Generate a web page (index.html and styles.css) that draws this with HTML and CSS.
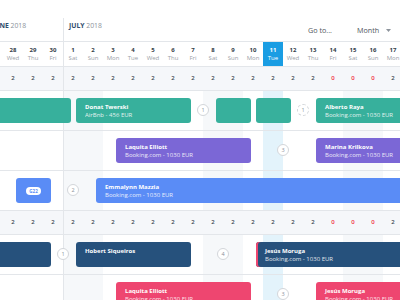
FILE: index.html
```html
<!DOCTYPE html>
<html lang="en">
<head>
<meta charset="UTF-8">
<meta name="viewport" content="width=device-width, initial-scale=1.0">
<title>Reservations - July 2018</title>
<link rel="stylesheet" href="styles.css">
</head>
<body>
<div class="scheduler">
    <div class="topbar">
        <div class="month month-june"><b>JUNE</b> 2018</div>
        <div class="month month-july">
            <span><b>JULY</b> 2018</span>
            <div class="controls">
                <span class="goto">Go to...</span>
                <span class="view-select">Month
                    <svg width="5" height="3" viewBox="0 0 5 3"><path d="M0 0h5L2.5 3z" fill="#8d949c"/></svg>
                </span>
            </div>
        </div>
    </div>

    <div class="timeline">
        <!-- one cell per day, 20px wide -->
        <div class="days">
            <div class="day"><b>26</b>Mon</div>
            <div class="day"><b>27</b>Tue</div>
            <div class="day"><b>28</b>Wed</div>
            <div class="day"><b>29</b>Thu</div>
            <div class="day"><b>30</b>Fri</div>
            <div class="day month-start"><b>1</b>Sat</div>
            <div class="day"><b>2</b>Sun</div>
            <div class="day"><b>3</b>Mon</div>
            <div class="day"><b>4</b>Tue</div>
            <div class="day"><b>5</b>Wed</div>
            <div class="day"><b>6</b>Thu</div>
            <div class="day"><b>7</b>Fri</div>
            <div class="day"><b>8</b>Sat</div>
            <div class="day"><b>9</b>Sun</div>
            <div class="day"><b>10</b>Mon</div>
            <div class="day today"><b>11</b>Tue</div>
            <div class="day"><b>12</b>Wed</div>
            <div class="day"><b>13</b>Thu</div>
            <div class="day"><b>14</b>Fri</div>
            <div class="day"><b>15</b>Sat</div>
            <div class="day"><b>16</b>Sun</div>
            <div class="day"><b>17</b>Mon</div>
            <div class="day"><b>18</b>Tue</div>
        </div>

        <!-- free rooms per day -->
        <div class="totals">
            <div class="total">2</div>
            <div class="total">2</div>
            <div class="total">2</div>
            <div class="total">2</div>
            <div class="total">2</div>
            <div class="total month-start">2</div>
            <div class="total">2</div>
            <div class="total">2</div>
            <div class="total">2</div>
            <div class="total">2</div>
            <div class="total">2</div>
            <div class="total">2</div>
            <div class="total">2</div>
            <div class="total">2</div>
            <div class="total">2</div>
            <div class="total">2</div>
            <div class="total">2</div>
            <div class="total">2</div>
            <div class="total empty">0</div>
            <div class="total empty">0</div>
            <div class="total empty">0</div>
            <div class="total">2</div>
            <div class="total">2</div>
        </div>

        <!-- bookings sit on a half-day grid: check-in / check-out at noon -->
        <div class="lane">
            <div class="booking teal" style="grid-column: 1 / 12;"></div>
            <div class="booking teal" style="grid-column: 12 / 24;"><b>Donat Twerski</b><span>AirBnb - 456 EUR</span></div>
            <div class="gap-count" style="grid-column: 24 / 26;">1</div>
            <div class="booking teal" style="grid-column: 26 / 30;"></div>
            <div class="booking teal" style="grid-column: 30 / 34;"></div>
            <div class="gap-count pending" style="grid-column: 34 / 36;">1</div>
            <div class="booking teal" style="grid-column: 36 / 47;"><b>Alberto Raya</b><span>Booking.com - 1030 EUR</span></div>
        </div>

        <div class="lane">
            <div class="booking purple" style="grid-column: 16 / 30;"><b>Laquita Elliott</b><span>Booking.com - 1030 EUR</span></div>
            <div class="gap-count" style="grid-column: 30 / 36;">3</div>
            <div class="booking purple" style="grid-column: 36 / 47;"><b>Marina Krilkova</b><span>Booking.com - 1030 EUR</span></div>
        </div>

        <div class="lane">
            <div class="booking blue compact" style="grid-column: 6 / 10;"><span class="tag">G22</span></div>
            <div class="gap-count" style="grid-column: 10 / 14;">2</div>
            <div class="booking blue" style="grid-column: 14 / 47;"><b>Emmalynn Mazzia</b><span>Booking.com - 1030 EUR</span></div>
        </div>

        <div class="totals">
            <div class="total">2</div>
            <div class="total">2</div>
            <div class="total">2</div>
            <div class="total">2</div>
            <div class="total">2</div>
            <div class="total month-start">2</div>
            <div class="total">2</div>
            <div class="total">2</div>
            <div class="total">2</div>
            <div class="total">2</div>
            <div class="total">2</div>
            <div class="total">2</div>
            <div class="total">2</div>
            <div class="total">2</div>
            <div class="total">2</div>
            <div class="total">2</div>
            <div class="total">2</div>
            <div class="total">2</div>
            <div class="total empty">0</div>
            <div class="total empty">0</div>
            <div class="total empty">0</div>
            <div class="total">2</div>
            <div class="total">2</div>
        </div>

        <div class="lane">
            <div class="booking navy" style="grid-column: 1 / 10;"></div>
            <div class="gap-count" style="grid-column: 10 / 12;">1</div>
            <div class="booking navy" style="grid-column: 12 / 24;"><b>Hobert Siqueiros</b></div>
            <div class="gap-count" style="grid-column: 24 / 30;">4</div>
            <div class="booking navy flagged" style="grid-column: 30 / 47;"><b>Jesús Moruga</b><span>Booking.com - 1030 EUR</span></div>
        </div>

        <div class="lane">
            <div class="booking pink" style="grid-column: 16 / 30;"><b>Laquita Elliott</b><span>Booking.com - 1030 EUR</span></div>
            <div class="gap-count" style="grid-column: 30 / 36;">3</div>
            <div class="booking pink" style="grid-column: 36 / 47;"><b>Jesús Moruga</b><span>Booking.com - 1030 EUR</span></div>
        </div>
    </div>
</div>
</body>
</html>
```

FILE: styles.css
```css
* {
    box-sizing: border-box;
}
body {
    margin: 0;
    font-family: 'Open Sans', 'Liberation Sans', sans-serif;
    color: #3a4451;
    background-color: #ffffff;
}
.scheduler {
    width: 400px;
    height: 300px;
    overflow: hidden;
}

/* top bar with month labels and view controls */
.topbar {
    display: flex;
    height: 42px;
    margin-left: -37px;
    padding-top: 18px;
    border-bottom: 1px solid #e3e6ea;
    font-size: 6.8px;
}
.month {
    line-height: 16px;
    color: #8b929b;
}
.month b {
    color: #2f4d6e;
    font-weight: 700;
}
.month-june {
    width: 100px;
    padding-left: 29px;
}
.month-july {
    flex: 1;
    display: flex;
    padding-left: 6px;
    box-shadow: inset 1px 0 0 #e3e6ea;
}
.controls {
    margin-left: auto;
    display: flex;
    align-items: center;
    padding-right: 9px;
    font-size: 7.2px;
    color: #4f5660;
}
.goto {
    margin-right: 25px;
}
.view-select svg {
    margin-left: 5px;
    vertical-align: middle;
}

/* day grid */
.timeline {
    width: 460px;
    margin-left: -37px;
}
.days {
    display: flex;
    height: 25px;
    border-bottom: 1px solid #e3e6ea;
}
.day {
    width: 20px;
    flex: none;
    padding-top: 4px;
    text-align: center;
    font-size: 6px;
    line-height: 8px;
    color: #9ba1a8;
}
.day b {
    display: block;
    color: #333d48;
    font-weight: 700;
}
.day.today {
    background-color: #1a9de3;
    color: #ffffff;
}
.day.today b {
    color: #ffffff;
}
.month-start {
    box-shadow: inset 1px 0 0 #e3e6ea;
}
.totals {
    display: flex;
    height: 24px;
    background-color: #f5f7fa;
    border-bottom: 1px solid #e3e6ea;
}
.total {
    width: 20px;
    flex: none;
    text-align: center;
    font-size: 6px;
    font-weight: 600;
    line-height: 23px;
    color: #3a4451;
}
.total.empty {
    color: #f0303e;
}

/* room lanes: weekend + today shading, month divider */
.lane {
    display: grid;
    grid-template-columns: repeat(46, 10px);
    align-items: start;
    height: 40px;
    padding-top: 7px;
    border-bottom: 1px solid #e3e6ea;
    background: linear-gradient(to right,
        transparent 100px, #e3e6ea 100px, #e3e6ea 101px,
        #f6f8fa 101px, #f6f8fa 140px, transparent 140px,
        transparent 240px, #f6f8fa 240px, #f6f8fa 280px, transparent 280px,
        transparent 300px, #e3f3fb 300px, #e3f3fb 320px, transparent 320px,
        transparent 380px, #f6f8fa 380px, #f6f8fa 420px, transparent 420px);
}
.booking {
    grid-row: 1;
    height: 25px;
    margin: 0 2px 0 3px;
    padding: 5px 0 0 9px;
    border-radius: 3px;
    color: #ffffff;
    font-size: 6px;
    line-height: 8px;
    white-space: nowrap;
    overflow: hidden;
}
.booking b {
    display: block;
    font-weight: 700;
}
.booking span {
    opacity: 0.85;
}
.teal {
    background-color: #37b09c;
}
.purple {
    background-color: #7b67d6;
}
.blue {
    background-color: #5a8cf6;
}
.navy {
    background-color: #26517c;
}
.pink {
    background-color: #ee4670;
}
.flagged {
    box-shadow: inset 2px 0 0 #ee4670;
}
.booking.compact {
    display: flex;
    align-items: center;
    justify-content: center;
    padding: 0;
}
.booking .tag {
    opacity: 1;
    padding: 0 3px;
    border-radius: 4px;
    background-color: #ffffff;
    color: #5a8cf6;
    font-size: 4.5px;
    font-weight: 700;
    line-height: 8px;
}
.gap-count {
    grid-row: 1;
    justify-self: center;
    width: 12px;
    height: 12px;
    margin-top: 6px;
    border: 1px solid #d3d6da;
    border-radius: 50%;
    background-color: #ffffff;
    text-align: center;
    font-size: 5.5px;
    line-height: 10px;
    color: #8a9098;
}
.gap-count.pending {
    border-style: dashed;
}
```
